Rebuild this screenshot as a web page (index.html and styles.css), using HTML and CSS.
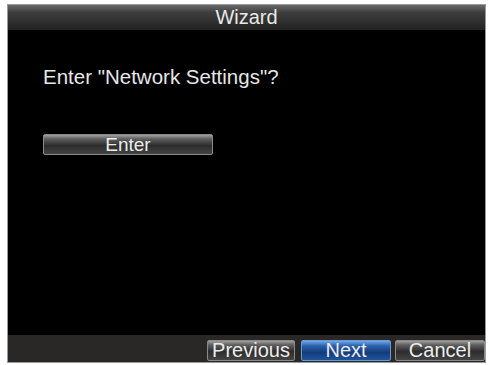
FILE: index.html
```html
<!DOCTYPE html>
<html>
<head>
<meta charset="utf-8">
<link rel="stylesheet" href="styles.css">
</head>
<body>
<div class="window">
  <div class="titlebar">Wizard</div>
  <div class="content">
    <div class="question">Enter "Network Settings"?</div>
    <button class="btn btn-enter">Enter</button>
  </div>
  <div class="footer">
    <button class="btn btn-prev">Previous</button>
    <button class="btn btn-next">Next</button>
    <button class="btn btn-cancel">Cancel</button>
  </div>
</div>
</body>
</html>
```
FILE: styles.css
```css
html, body {
  margin: 0;
  padding: 0;
  background: #fff;
  width: 490px;
  height: 365px;
  overflow: hidden;
}
body {
  padding: 4px 5px 2px 7px;
  box-sizing: border-box;
  font-family: "Liberation Sans", Arial, sans-serif;
}
.window {
  width: 479px;
  height: 359px;
  display: flex;
  flex-direction: column;
  background: #000;
  border: 1px solid #9a9a9a;
  box-sizing: border-box;
}
.titlebar {
  height: 25px;
  background: linear-gradient(#6a6a6a 0%, #3e3e3e 30%, #222 100%);
  color: #e8e8e8;
  font-size: 20px;
  text-align: center;
  line-height: 25px;
}
.content {
  flex: 1;
  padding: 35px 0 0 35px;
  display: flex;
  flex-direction: column;
  align-items: flex-start;
}
.question {
  color: #e6e6e6;
  font-size: 20.5px;
  line-height: 23px;
}
.btn {
  font-family: "Liberation Sans", Arial, sans-serif;
  font-size: 20px;
  color: #ececec;
  border: 1px solid #8a8a8a;
  border-radius: 2px;
  padding: 0;
  margin: 0;
  height: 21px;
  line-height: 19px;
  box-sizing: border-box;
  background: linear-gradient(#a0a0a0 0%, #606060 20%, #2c2c2c 55%, #444 100%);
}
.btn-enter {
  margin-top: 46px;
  width: 170px;
  font-size: 19px;
}
.footer {
  height: 27px;
  background: #2a2826;
  display: flex;
  justify-content: flex-end;
  align-items: flex-start;
  padding-top: 5px;
  box-sizing: border-box;
}
.btn-prev { width: 88px; }
.btn-next {
  width: 90px;
  margin-left: 6px;
  border-color: #6a9ad0;
  background: linear-gradient(#70a8e8 0%, #2c62ae 25%, #143c7c 60%, #1f539c 100%);
}
.btn-cancel { width: 90px; margin-left: 4px; }
```
